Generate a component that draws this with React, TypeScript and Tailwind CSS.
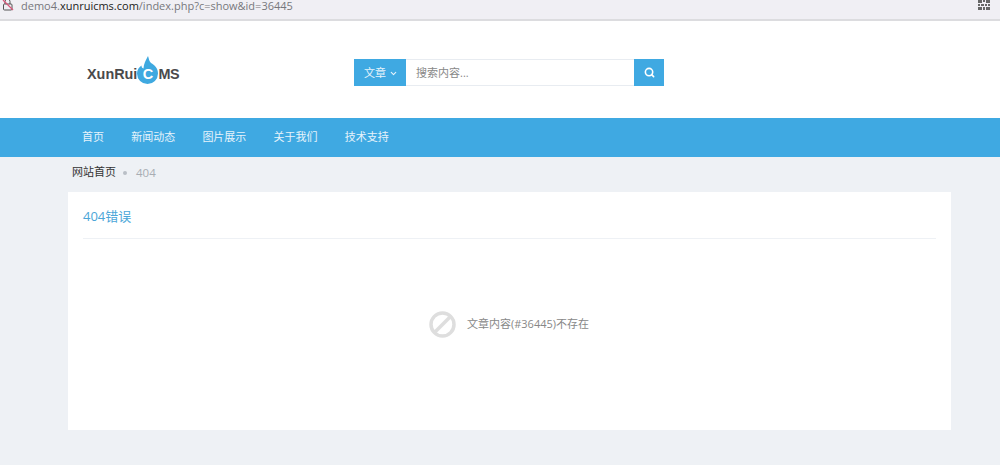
import React from "react";
import { ChevronDown, Search } from "lucide-react";

const nav = ["首页", "新闻动态", "图片展示", "关于我们", "技术支持"];

export default function App() {
  return (
    <div className="w-[1000px] h-[465px] overflow-hidden bg-[#eef1f5] font-['Open_Sans','Noto_Sans_CJK_SC',sans-serif]">
      {/* browser bar */}
      <div className="h-[21px] bg-[#f0eff4] border-b-2 border-[#dcdcdf] flex items-start overflow-hidden relative">
        <svg width="14" height="14" viewBox="0 0 14 14" className="ml-[1px] -mt-[2px] shrink-0" fill="none">
          <path d="M4 6V3.500a2.500 2.500 0 0 1 5 0V6" stroke="#555" strokeWidth="1" />
          <rect x="2.500" y="6" width="8.500" height="6" rx="1" stroke="#555" strokeWidth="1" />
          <path d="M2 2l10 10" stroke="#d9567a" strokeWidth="1.200" />
        </svg>
        <div className="ml-[6px] text-[11px] leading-[11px] text-[#77777c] whitespace-nowrap">
          demo4.<span className="text-[#1c1c20]">xunruicms.com</span>/index.php?c=show&amp;id=36445
        </div>
        <svg width="12" height="10" viewBox="0 0 12 10" className="absolute left-[978px] top-0" fill="#666">
          <path d="M0 0h4v3H0zM5 0h2v2H5zM8 0h4v3H8zM0 4h2v2H0zM3 4h3v2H3zM7 4h2v2H7zM10 4h2v2h-2zM0 7h4v3H0zM5 7h2v3H5zM8 7h4v3H8z" />
        </svg>
      </div>

      {/* header */}
      <div className="h-[97px] bg-white flex items-start pl-[87px]">
        <div className="w-[267px] pt-[33px] shrink-0">
          <div className="flex items-center h-[32px] text-[14.4px] font-bold text-[#4a4a4c] leading-none font-['Liberation_Sans',sans-serif]">
            <span className="mt-[9px]">XunRui</span>
            <span className="relative w-[23px] h-[30px] -mx-[1px] shrink-0">
              <svg width="23" height="30" viewBox="0 0 23 30" className="absolute left-0 top-0">
                <path d="M12 1C13 4 13 6 15 8C18.500 10 22 13 22 18.500A10.500 10.500 0 0 1 1 18.500C1 15 3 12 5.500 10.500C5.500 12 6 13 7.500 13.500C7.500 9 10 5 12 1z" fill="#3fa9e0" />
              </svg>
              <span className="absolute inset-x-0 top-[12px] text-center text-white text-[14.5px]">C</span>
            </span>
            <span className="mt-[9px] tracking-[-0.02em]">MS</span>
          </div>
        </div>
        <div className="flex mt-[38px] h-[27px]">
          <div className="w-[52px] bg-[#3fa9e2] text-[#e6f3fb] text-[11px] flex items-center justify-center gap-[3px] pl-[2px] pt-[1px]">
            文章
            <ChevronDown size={9} strokeWidth={3} />
          </div>
          <div className="w-[228px] bg-white border-y border-[#e8ecf1] pl-[10px] pt-[1px] text-[11px] text-[#888] flex items-center">
            搜索内容...
          </div>
          <div className="w-[30px] bg-[#3fa9e2] text-white flex items-center justify-center">
            <Search size={11} strokeWidth={3.500} />
          </div>
        </div>
      </div>

      {/* nav */}
      <div className="h-[39px] bg-[#3fa9e2] flex items-center pl-[82px] gap-[27.200px] text-[11px] text-[#e6f3fb]">
        {nav.map((n) => (
          <span key={n}>{n}</span>
        ))}
      </div>

      {/* breadcrumb */}
      <div className="h-[35px] pl-[72px] flex items-center text-[11px] pb-[4px]">
        <span className="text-[#333]">网站首页</span>
        <span className="w-[4px] h-[4px] rounded-full bg-[#b9bfc6] ml-[7px] mr-[9px]" />
        <span className="text-[#a8adb3] text-[11.500px]">404</span>
      </div>

      {/* card */}
      <div className="ml-[68px] w-[883px] h-[238px] bg-white px-[15px]">
        <div className="h-[47px] border-b border-[#eef1f5] flex items-center pt-[3px] text-[#4ba6d8] text-[13px]">
          404错误
        </div>
        <div className="flex items-center justify-center h-[171px] gap-[11px] pr-[1px]">
          <svg width="27" height="27" viewBox="0 0 27 27" fill="none" stroke="#dedede" strokeWidth="3.500">
            <circle cx="13.500" cy="13.500" r="11.500" />
            <path d="M21.500 5.500l-16 16" />
          </svg>
          <span className="text-[11px] text-[#888]">文章内容(#36445)不存在</span>
        </div>
      </div>
    </div>
  );
}
